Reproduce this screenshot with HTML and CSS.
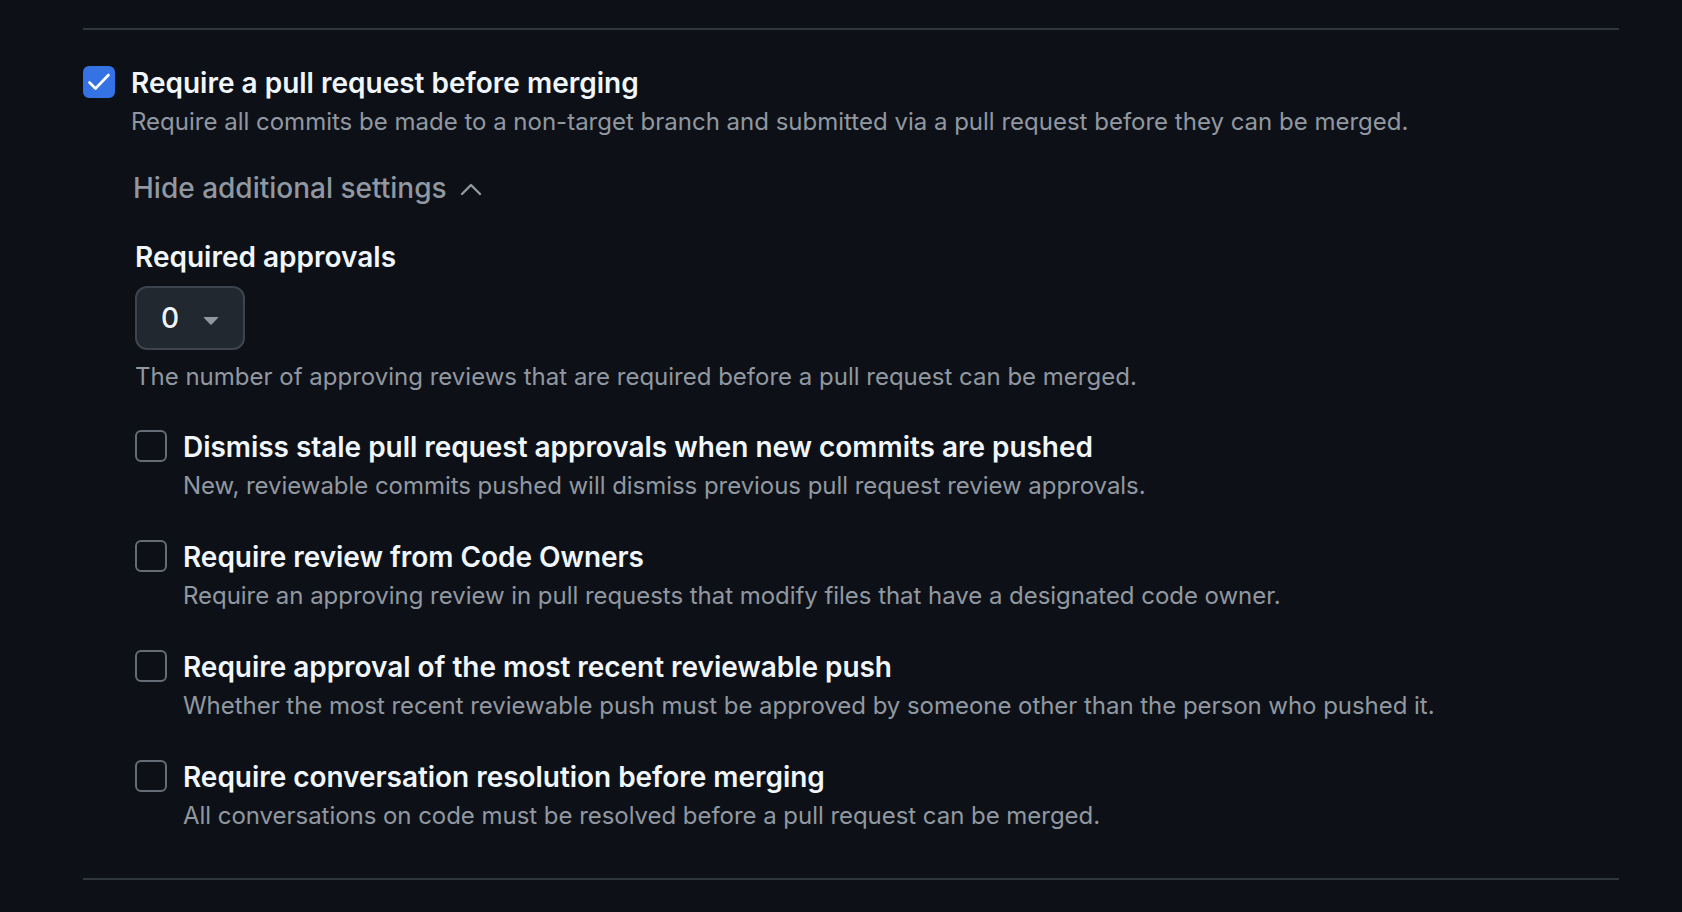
FILE: index.html
```html
<!DOCTYPE html>
<html lang="en">
<head>
<meta charset="utf-8">
<title>Branch protection</title>
<link rel="stylesheet" href="styles.css">
</head>
<body>
<div class="page">
  <div class="divider"></div>

  <div class="rule main">
    <div class="cb cb-checked">
      <svg class="check" viewBox="0 0 32 32" width="32" height="32"><polyline points="6.5,16.5 12.5,22.5 25.5,9" fill="none" stroke="#ffffff" stroke-width="2.6" stroke-linecap="round" stroke-linejoin="round"/></svg>
    </div>
    <div class="rule-body">
      <div class="rule-title">Require a pull request before merging</div>
      <div class="rule-desc">Require all commits be made to a non-target branch and submitted via a pull request before they can be merged.</div>

      <div class="toggle">
        <span>Hide additional settings</span>
        <svg class="chevron" viewBox="0 0 22 14" width="22" height="14"><polyline points="2,12 11,3 20,12" fill="none" stroke="#9198a1" stroke-width="2.4" stroke-linecap="round" stroke-linejoin="round"/></svg>
      </div>

      <div class="sub">
        <div class="field-label">Required approvals</div>
        <div class="select">
          <span class="select-value">0</span>
          <svg class="caret" viewBox="0 0 16 16" width="32" height="32"><path fill="#9198a1" d="m4.427 7.427 3.396 3.396a.25.25 0 0 0 .354 0l3.396-3.396A.25.25 0 0 0 11.396 7H4.604a.25.25 0 0 0-.177.427Z"/></svg>
        </div>
        <div class="field-help">The number of approving reviews that are required before a pull request can be merged.</div>

        <div class="options">
          <div class="rule">
            <div class="cb"></div>
            <div class="rule-body">
              <div class="rule-title">Dismiss stale pull request approvals when new commits are pushed</div>
              <div class="rule-desc">New, reviewable commits pushed will dismiss previous pull request review approvals.</div>
            </div>
          </div>
          <div class="rule">
            <div class="cb"></div>
            <div class="rule-body">
              <div class="rule-title">Require review from Code Owners</div>
              <div class="rule-desc">Require an approving review in pull requests that modify files that have a designated code owner.</div>
            </div>
          </div>
          <div class="rule">
            <div class="cb"></div>
            <div class="rule-body">
              <div class="rule-title">Require approval of the most recent reviewable push</div>
              <div class="rule-desc">Whether the most recent reviewable push must be approved by someone other than the person who pushed it.</div>
            </div>
          </div>
          <div class="rule">
            <div class="cb"></div>
            <div class="rule-body">
              <div class="rule-title">Require conversation resolution before merging</div>
              <div class="rule-desc">All conversations on code must be resolved before a pull request can be merged.</div>
            </div>
          </div>
        </div>
      </div>
    </div>
  </div>

  <div class="divider bottom"></div>
</div>
</body>
</html>
```

FILE: styles.css
```css
html, body {
  margin: 0;
  padding: 0;
  background: #0d1117;
}

body {
  font-family: "Inter", "Noto Sans", "Liberation Sans", sans-serif;
  color: #f0f6fc;
  height: 912px;
  overflow: hidden;
}

.page {
  padding: 28px 63px 0 83px;
}

.divider {
  height: 2px;
  background: #30363d;
}

.divider.bottom {
  margin-top: 44px;
}

.rule {
  display: flex;
  gap: 16px;
  align-items: flex-start;
}

.rule.main {
  margin-top: 32px;
}

.cb {
  flex: none;
  width: 32px;
  height: 32px;
  margin-top: 4px;
  box-sizing: border-box;
  border: 2px solid #656c76;
  border-radius: 6px;
}

.cb-checked {
  background: #3572e3;
  border-color: #3572e3;
  position: relative;
}

.check {
  position: absolute;
  left: -2px;
  top: -2px;
}

.rule-body {
  flex: 1;
  min-width: 0;
}

.rule-title {
  padding-top: 1px;
  margin-bottom: -1px;
  font-size: 28px;
  line-height: 40px;
  font-weight: 600;
  color: #f0f6fc;
}

.sub .rule-title {
  letter-spacing: -0.04px;
}

.rule-desc {
  margin-top: 2px;
  font-size: 24px;
  line-height: 36px;
  font-weight: 400;
  color: #9198a1;
}

.sub .rule-desc {
  letter-spacing: -0.04px;
}

.toggle {
  margin-top: 28px;
  margin-left: 2px;
  display: flex;
  align-items: center;
  gap: 13px;
  font-size: 28px;
  line-height: 40px;
  font-weight: 500;
  color: #9198a1;
}

.chevron {
  display: block;
  margin-top: 1px;
}

.sub {
  margin-top: 29px;
  margin-left: 4px;
}

.field-label {
  font-size: 28px;
  line-height: 40px;
  font-weight: 600;
  color: #f0f6fc;
}

.select {
  margin-top: 9px;
  width: 110px;
  height: 64px;
  box-sizing: border-box;
  border: 2px solid #3d444d;
  border-radius: 12px;
  background: #212830;
  display: flex;
  align-items: center;
  padding-left: 24px;
}

.select-value {
  font-size: 28px;
  line-height: 40px;
  font-weight: 500;
  color: #f0f6fc;
}

.caret {
  display: block;
  margin-left: 16px;
  margin-top: 1px;
}

.field-help {
  margin-top: 9px;
  font-size: 24px;
  line-height: 36px;
  color: #9198a1;
}

.options {
  margin-top: 31px;
  display: flex;
  flex-direction: column;
  gap: 32px;
}
```
